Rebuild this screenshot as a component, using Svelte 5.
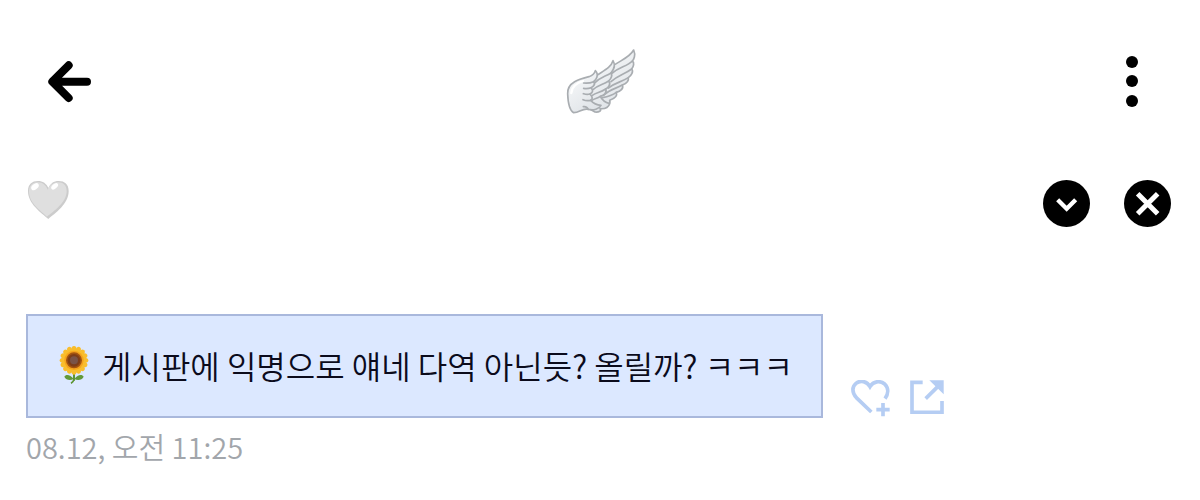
<script lang="ts">
    let { message = '게시판에 익명으로 얘네 다역 아닌듯? 올릴까? ㅋㅋㅋ', time = '08.12, 오전 11:25' } = $props();

    // Sunflower petals, placed evenly around the centre
    const petals = Array.from({ length: 16 }, (_, i) => i * 22.5);
</script>

<div class="page">
    <header class="topbar">
        <button class="back" aria-label="뒤로">
            <svg width="44" height="44" viewBox="0 0 132 132" fill="none" stroke="#000" stroke-width="24" stroke-linecap="round" stroke-linejoin="round">
                <path d="M120 68H18M65 19L16 68l49 49" />
            </svg>
        </button>

        <svg class="wing" width="90" height="80" viewBox="0 0 270 240" stroke="#a9adb1" stroke-width="5" stroke-linejoin="round" stroke-linecap="round">
            <defs>
                <linearGradient id="feather" x1="0" y1="0" x2="0.6" y2="1">
                    <stop offset="0" stop-color="#fafbfc" />
                    <stop offset="1" stop-color="#e0e4e8" />
                </linearGradient>
            </defs>
            <g fill="url(#feather)">
                <path d="M160 85C190 59 222 53 236 27C243 43 236 56 232 60C239 65 236 76 230 84C237 92 228 104 220 110C222 120 213 128 202 132C207 143 196 151 184 154C188 166 176 174 164 178C168 188 158 193 145 194L110 168Z" />
                <path d="M112 113C138 91 166 85 174 59C184 75 173 90 168 96C174 106 166 115 161 120C169 130 160 140 152 144C157 156 147 164 136 166C142 179 150 184 164 188C160 201 147 204 135 203C141 210 132 214 120 213L85 193Z" />
                <path d="M38 158C36 122 78 113 102 107C116 102 119 97 121 89C134 102 122 117 116 122C122 130 115 137 108 140C117 149 112 156 105 159C114 169 113 175 107 178C116 188 125 192 138 193C132 204 116 209 100 205C83 200 74 215 56 215C43 208 39 188 38 158Z" />
            </g>
            <g fill="none">
                <path d="M232 60C216 76 193 78 172 96M230 84C210 99 190 102 168 122M220 110C198 124 180 125 160 141M202 132C181 144 165 145 147 162M184 154C170 164 158 167 143 170" />
                <path d="M168 96C150 107 136 109 120 125M161 120C143 132 130 131 114 146M152 144C135 156 125 153 112 163M136 166C126 173 119 172 111 178" />
                <path d="M116 122C104 127 96 127 86 126M108 140C98 144 92 143 86 142M105 159C96 162 91 160 85 158M107 178C97 180 91 179 84 176M100 205C96 198 91 196 85 197" />
            </g>
            <path d="M49 156C50 135 65 126 84 120" fill="none" stroke="#fff" stroke-width="7" />
        </svg>

        <button class="more" aria-label="더보기">
            <svg width="14" height="52" viewBox="0 0 14 52">
                <circle cx="7" cy="7" r="6" />
                <circle cx="7" cy="26" r="6" />
                <circle cx="7" cy="46" r="6" />
            </svg>
        </button>
    </header>

    <div class="notice">
        <svg width="44" height="40" viewBox="0 0 132 120">
            <path d="M67 117C45 97 6 72 6 33C6 13 18 3 36 3C50 3 62 11 67 24C73 11 83 3 98 3C116 3 128 13 128 33C128 72 88 99 67 117Z" fill="#cccccc" />
            <path d="M63 110C43 91 9 70 9 34C9 17 20 7 36 7C51 7 60 17 65 29C71 16 82 7 96 7C112 7 122 16 122 33C122 68 83 93 63 110Z" fill="#dfdfdf" />
            <ellipse cx="27" cy="20" rx="13" ry="8" transform="rotate(-40 27 20)" fill="#fff" />
            <ellipse cx="86" cy="19" rx="12" ry="7" transform="rotate(-40 86 19)" fill="#fff" />
        </svg>
        <div class="controls">
            <button aria-label="펼치기">
                <svg width="47" height="47" viewBox="0 0 141 141" fill="none" stroke="#fff" stroke-width="13">
                    <circle cx="70.5" cy="70.5" r="70.5" fill="#000" stroke="none" />
                    <path d="M44 59l27 27 27-27" />
                </svg>
            </button>
            <button aria-label="닫기">
                <svg width="47" height="47" viewBox="0 0 141 141" fill="none" stroke="#fff" stroke-width="15">
                    <circle cx="70.5" cy="70.5" r="70.5" fill="#000" stroke="none" />
                    <path d="M41 41l60 60M101 41l-60 60" />
                </svg>
            </button>
        </div>
    </div>

    <main>
        <div class="row">
            <div class="bubble">
                <svg class="flower" width="32" height="38" viewBox="0 0 96 114">
                    <path d="M48 74v30" stroke="#5c9534" stroke-width="6" />
                    <path d="M47 99C36 84 23 85 19 92C24 103 37 104 47 99ZM49 99C60 84 73 85 77 92C72 103 59 104 49 99Z" fill="#62993a" />
                    <path d="M48 100q-2 8-9 12" fill="none" stroke="#5c9534" stroke-width="5" />
                    {#each petals as angle}
                        <ellipse cx="48" cy="12" rx="8" ry="12" fill="#f9bd2c" transform="rotate({angle} 48 43)" />
                    {/each}
                    <circle cx="48" cy="43" r="29" fill="#f5a31c" />
                    <circle cx="48" cy="43" r="24" fill="#a4540f" />
                    <circle cx="48" cy="43" r="19" fill="#7d3d18" />
                    <circle cx="48" cy="43" r="12" fill="#795347" />
                </svg>
                <p>{message}</p>
            </div>
            <div class="actions">
                <button aria-label="좋아요">
                    <svg width="40" height="38" viewBox="0 0 120 114" fill="none" stroke="#b5cdf3" stroke-width="11">
                        <path d="M61 96L16 53C2 37 3 20 15 10C29-1 48 4 57 20C67 3 87 1 101 12C114 25 112 42 102 56" />
                        <path d="M96 69v40M76 89h40" />
                    </svg>
                </button>
                <button aria-label="공유">
                    <svg width="34" height="34" viewBox="0 0 102 102" fill="none" stroke="#b5cdf3" stroke-width="11">
                        <path d="M38 7H6v90h90V63M47 56L84 19" />
                        <path d="M58 1h43v42z" fill="#b5cdf3" stroke="none" />
                    </svg>
                </button>
            </div>
        </div>
        <time>{time}</time>
    </main>
</div>

<style>
    :global(body) {
        margin: 0;
        background: #fff;
    }

    .page {
        font-family: 'Noto Sans CJK KR', sans-serif;
        font-weight: 350;
    }

    button {
        display: block;
        padding: 0;
        border: none;
        background: none;
        cursor: pointer;
    }

    svg {
        display: block;
        flex: none;
    }

    .topbar {
        display: grid;
        grid-template-columns: 1fr auto 1fr;
        align-items: center;
        padding: 41px 47px 40px;
    }

    .back {
        justify-self: start;
    }

    .more {
        justify-self: end;
        padding-right: 14px;
    }

    .notice {
        display: flex;
        justify-content: space-between;
        align-items: flex-start;
        padding: 19px 29px 0 26px;
    }

    .controls {
        display: flex;
        gap: 34px;
    }

    main {
        padding: 87px 26px 0;
    }

    .row {
        display: flex;
        align-items: flex-end;
        gap: 28px;
    }

    .bubble {
        display: flex;
        align-items: center;
        gap: 12px;
        padding: 25px 28px 27px 30px;
        border: 2px solid #a9b8dc;
        background: #dce8ff;
    }

    .bubble p {
        margin: 0;
        font-size: 32px;
        line-height: 48px;
        color: #0b0b1c;
    }

    .actions {
        display: flex;
        align-items: flex-start;
        gap: 19px;
    }

    time {
        display: block;
        margin-top: 8px;
        font-size: 29px;
        line-height: 40px;
        color: #a2a6ab;
    }
</style>
